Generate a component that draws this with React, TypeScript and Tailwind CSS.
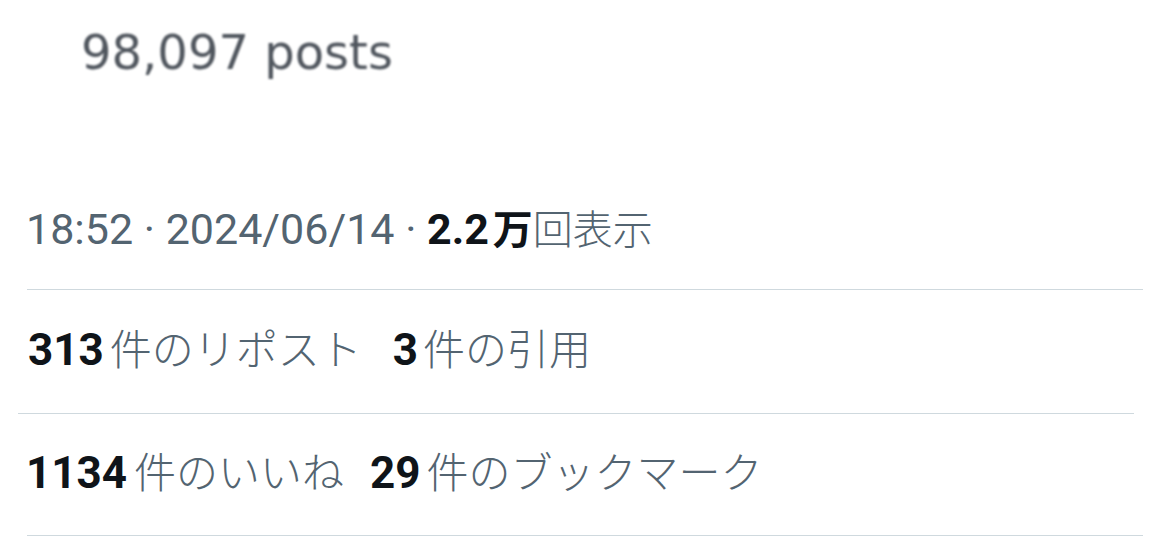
export default function App() {
  const font = { fontFamily: 'Roboto, "Noto Sans CJK JP", sans-serif' };
  return (
    <div className="w-[1170px] h-[536px] bg-white overflow-hidden" style={font}>
      {/* blurry embedded image */}
      <div className="h-[204px] pt-[28px] pl-[81px]">
        <span
          className="text-[48px] leading-[48px] text-[#50565e] blur-[1px] inline-block"
          style={{ fontFamily: '"DejaVu Sans", sans-serif' }}
        >
          98,097 posts
        </span>
      </div>

      {/* timestamp */}
      <div className="pl-[26px] text-[40px] leading-[50px] text-[#536471] whitespace-nowrap">
        <span className="text-[43px]">18:52 · 2024/06/14 · </span>
        <span className="font-bold text-[43px] text-[#0f1419]">2.2</span>
        <span className="font-bold text-[#0f1419] ml-[4px]">万</span>
        <span className="font-light">回表示</span>
      </div>
      <div className="mt-[33px] ml-[27px] w-[1116px] h-px bg-[#cfd9de]" />

      {/* reposts */}
      <div className="pt-[35px] pl-[28px] text-[42px] leading-[50px] text-[#536471] whitespace-nowrap flex items-baseline">
        <span className="font-bold text-[44px] text-[#0f1419] mr-[6px]">313</span>
        <span className="font-light">件のリポスト</span>
        <span className="font-bold text-[44px] text-[#0f1419] ml-[31px] mr-[5px]">3</span>
        <span className="font-light">件の引用</span>
      </div>
      <div className="mt-[37px] ml-[18px] w-[1116px] h-px bg-[#cfd9de]" />

      {/* likes */}
      <div className="pt-[34px] pl-[26px] text-[42px] leading-[50px] text-[#536471] whitespace-nowrap flex items-baseline">
        <span className="font-bold text-[44px] text-[#0f1419] mr-[7px]">1134</span>
        <span className="font-light">件のいいね</span>
        <span className="font-bold text-[44px] text-[#0f1419] ml-[26px] mr-[6px]">29</span>
        <span className="font-light">件のブックマーク</span>
      </div>
      <div className="mt-[36px] ml-[27px] w-[1116px] h-px bg-[#cfd9de]" />
    </div>
  );
}
